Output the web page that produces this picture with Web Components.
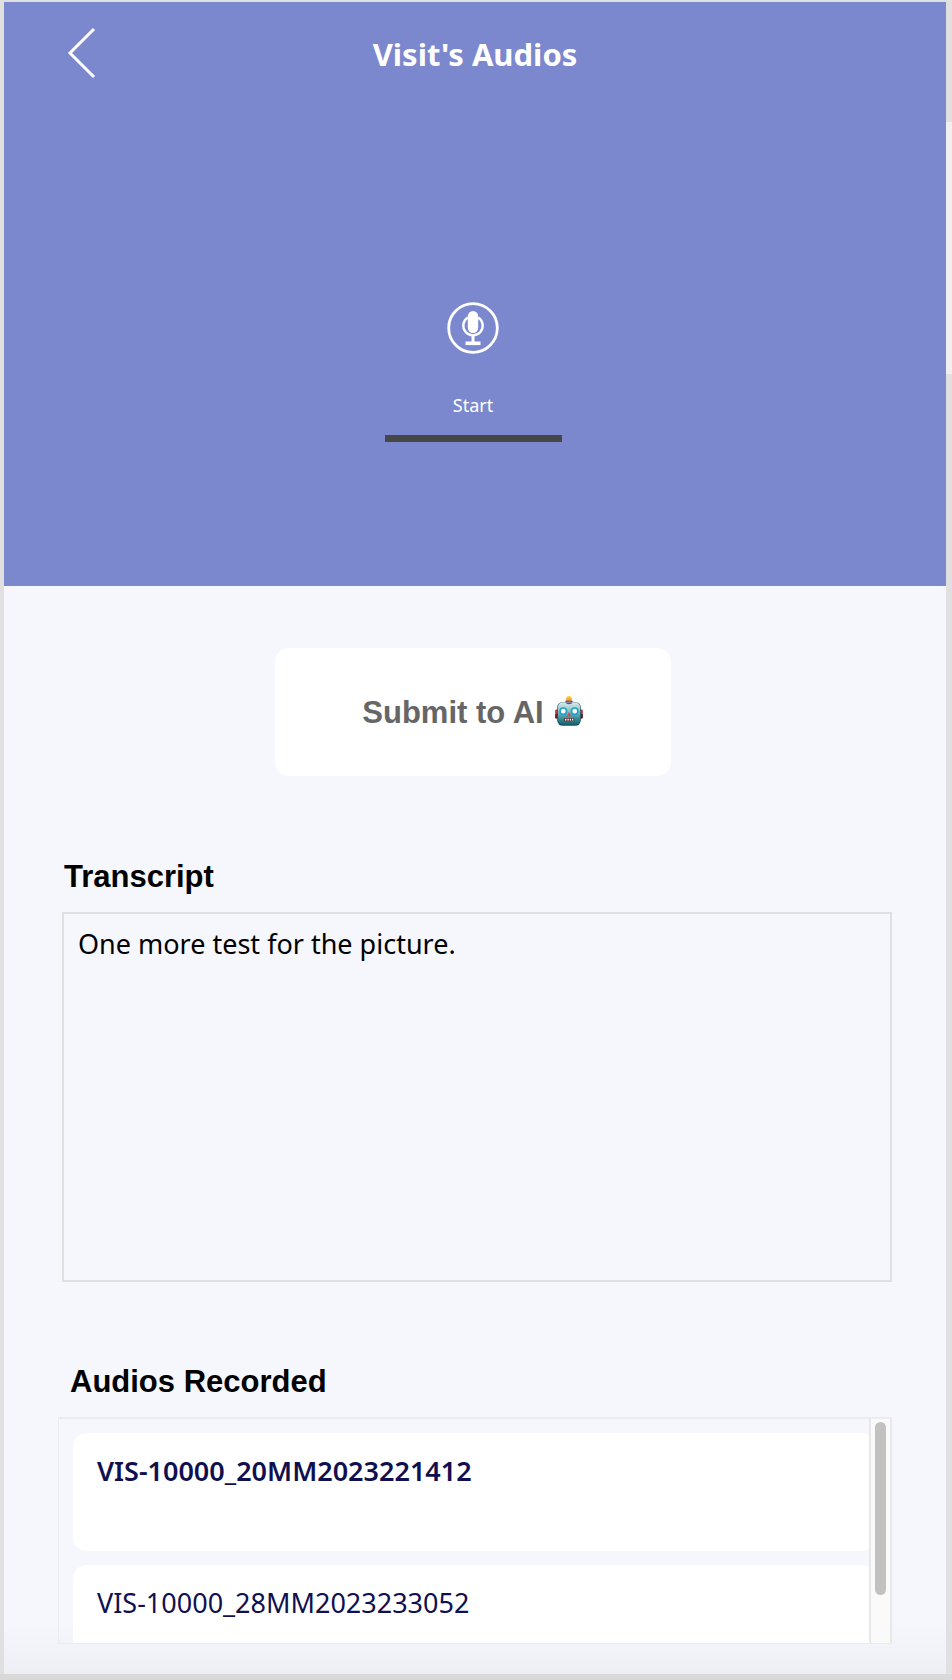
<!DOCTYPE html>
<html lang="en">
<head>
<meta charset="utf-8">
<meta name="viewport" content="width=device-width, initial-scale=1">
<title>Visit's Audios</title>
<style>
  html { height: 100%; }
  body {
    margin: 0;
    min-height: 100%;
    box-sizing: border-box;
    padding: 2px 6px 6px 4px;
    display: flex;
    font-family: "Noto Sans", "Open Sans", sans-serif;
    background:
      linear-gradient(#f0f0f0, #f0f0f0) right 0 top 122px / 6px 252px no-repeat,
      linear-gradient(#e0e0e0 0, #e0e0e0 calc(100% - 6px), #d9d9d9 calc(100% - 6px));
  }
</style>
</head>
<body>
<visit-app></visit-app>

<script>
  const define = (name, html, setup) => {
    const template = document.createElement("template");
    template.innerHTML = html;
    customElements.define(name, class extends HTMLElement {
      constructor() {
        super();
        this.attachShadow({ mode: "open" }).append(template.content.cloneNode(true));
      }
      connectedCallback() {
        if (setup) setup(this, this.shadowRoot);
      }
    });
  };

  define("app-header", `
    <style>
      :host { display: flex; flex-direction: column; height: 584px; background: #7b88cd; color: #fff; }
      header { display: grid; grid-template-columns: 1fr auto 1fr; align-items: center; padding: 22px 60px 0; }
      button { justify-self: start; display: flex; padding: 0; border: 0; background: none; color: inherit; cursor: pointer; }
      h1 { margin: 0; font-size: 31px; line-height: 60px; font-weight: 700; }
    </style>
    <header>
      <button aria-label="Back">
        <svg width="34" height="60" viewBox="0 0 34 60" fill="none" stroke="currentColor" stroke-width="3"><path d="M30 5 6 29 30 53"/></svg>
      </button>
      <h1><slot name="title"></slot></h1>
    </header>
    <slot></slot>
  `);

  define("audio-recorder", `
    <style>
      :host { display: flex; justify-content: center; padding: 218px 4px 0 0; }
      button { display: flex; flex-direction: column; align-items: center; width: 177px; padding: 0; border: 0; border-bottom: 7px solid #464646; background: none; color: #fff; font: 18px/24px "Noto Sans", "Open Sans", sans-serif; cursor: pointer; }
      span { padding: 39px 0 18px; }
    </style>
    <button>
      <svg width="52" height="52" viewBox="0 0 52 52" fill="none" stroke="currentColor" aria-hidden="true">
        <circle cx="26" cy="26" r="24.3" stroke-width="2.8"/>
        <rect x="20.8" y="9" width="10.4" height="22" rx="5.2" fill="currentColor" stroke="none"/>
        <path d="M20.8 15.5a9.7 9.7 0 1 0 10.4 0" stroke-width="2.4"/>
        <path d="M26 33v8" stroke-width="3"/>
        <path d="M18.5 41.3h15" stroke-width="3.6"/>
      </svg>
      <span><slot></slot></span>
    </button>
  `);

  define("submit-button", `
    <style>
      :host { display: flex; justify-content: center; padding-right: 4px; }
      button { display: flex; align-items: center; justify-content: center; gap: 10px; width: 396px; height: 128px; padding: 2px 0 0; border: 0; border-radius: 14px; background: #fff; color: #666; font: 700 31px/36px "Liberation Sans", Arial, sans-serif; cursor: pointer; }
      svg { margin-bottom: 4px; }
    </style>
    <button>
      <slot></slot>
      <svg width="30" height="32" viewBox="0 0 30 32" role="img" aria-label="Robot">
        <defs>
          <linearGradient id="face" x2="0" y2="1"><stop stop-color="#dcebed"/><stop offset=".35" stop-color="#94c6cc"/><stop offset=".7" stop-color="#3d8f9c"/><stop offset="1" stop-color="#12606f"/></linearGradient>
          <linearGradient id="lamp" x2="0" y2="1"><stop stop-color="#ffd83a"/><stop offset=".6" stop-color="#f5a12e"/><stop offset="1" stop-color="#b04a35"/></linearGradient>
        </defs>
        <rect x="1.2" y="14.5" width="4" height="9" rx="1" fill="#b8343d"/>
        <rect x="24.8" y="14.5" width="4" height="9" rx="1" fill="#b8343d"/>
        <path d="M1.2 19h3v4.500h-2q-1 0-1-1zM28.800 19h-3v4.500h2q1 0 1-1z" fill="#57202d"/>
        <ellipse cx="15" cy="7" rx="3.800" ry="1.900" fill="#5b4d91"/>
        <ellipse cx="15" cy="4" rx="2.800" ry="3" fill="url(#lamp)"/>
        <rect x="3.200" y="7" width="23.600" height="23.800" rx="5.500" fill="#164e5b"/>
        <rect x="3.800" y="7.200" width="22.400" height="22.600" rx="5" fill="url(#face)"/>
        <path d="M11.500 7.500h7q-.5 1.800-3.500 1.800t-3.500-1.800" fill="#5b4d91"/>
        <g fill="#fff" stroke="#22a3c7" stroke-width="1.700"><circle cx="9.300" cy="16.200" r="3.200"/><circle cx="20.700" cy="16.200" r="3.200"/></g>
        <path d="M15 17l2.300 4.300h-4.600z" fill="#e0444b"/>
        <rect x="9.800" y="23" width="10.400" height="3.200" rx="1" fill="#5a3a3d"/>
        <path d="M11 24.600h1.400m1.100 0h1.200m1.100 0H17m1 0h1.200" stroke="#fff" stroke-width="1.900"/>
      </svg>
    </button>
  `);

  define("transcript-box", `
    <style>
      :host { display: flex; flex-direction: column; }
      label { padding-left: 2px; font: 700 31px/36px "Liberation Sans", Arial, sans-serif; }
      textarea { box-sizing: border-box; width: 100%; height: 370px; margin: 17px 0 0; padding: 12px 14px; border: 2px solid #e0e0e2; border-radius: 0; outline: 0; resize: none; background: transparent; color: #000; font: 27px/36px "Noto Sans", "Open Sans", sans-serif; }
    </style>
    <label for="text"><slot></slot></label>
    <textarea id="text"></textarea>
  `, (host, root) => {
    root.querySelector("textarea").value = host.getAttribute("value");
  });

  define("audio-item", `
    <style>
      :host { display: block; flex: none; box-sizing: border-box; height: 118px; padding: 20px 24px; border-radius: 14px; background: #fff; color: #101050; font-size: 27px; line-height: 36px; }
      :host([selected]) { font-weight: 600; }
    </style>
    <slot></slot>
  `);

  define("audio-list", `
    <style>
      :host { display: block; }
      h2 { margin: 0 0 17px; padding-left: 12px; font: 700 31px/36px "Liberation Sans", Arial, sans-serif; }
      .frame { display: grid; grid-template-columns: 1fr 23px; height: 227px; box-sizing: border-box; border: 1px solid #ececee; border-top-width: 2px; border-right: 0; }
      .items { display: grid; grid-template-columns: calc(100% + 6px); align-content: start; gap: 14px; min-height: 0; padding: 14px 0 14px 14px; overflow: hidden auto; scrollbar-width: none; }
      .track { padding: 3px 4px; border: solid #e8e8ea; border-width: 0 2px; background: #fafafa; }
      .thumb { width: 11px; height: 173px; border-radius: 6px; background: #c1c1c1; }
    </style>
    <h2><slot name="title"></slot></h2>
    <div class="frame">
      <div class="items" tabindex="0"><slot></slot></div>
      <div class="track" aria-hidden="true"><div class="thumb"></div></div>
    </div>
  `);

  define("visit-app", `
    <style>
      :host { flex: 1; display: flex; flex-direction: column; min-width: 0; background: linear-gradient(transparent calc(100% - 50px), #eeeff5), #f5f7fc; }
      main { display: flex; flex-direction: column; padding: 62px 54px 30px; }
      transcript-box { margin: 83px 0 0 4px; }
      audio-list { margin-top: 82px; }
    </style>
    <app-header>
      <span slot="title">Visit's Audios</span>
      <audio-recorder>Start</audio-recorder>
    </app-header>
    <main>
      <submit-button>Submit to AI</submit-button>
      <transcript-box value="One more test for the picture.">Transcript</transcript-box>
      <audio-list>
        <span slot="title">Audios Recorded</span>
        <audio-item selected>VIS-10000_20MM2023221412</audio-item>
        <audio-item>VIS-10000_28MM2023233052</audio-item>
      </audio-list>
    </main>
  `);
</script>
</body>
</html>
